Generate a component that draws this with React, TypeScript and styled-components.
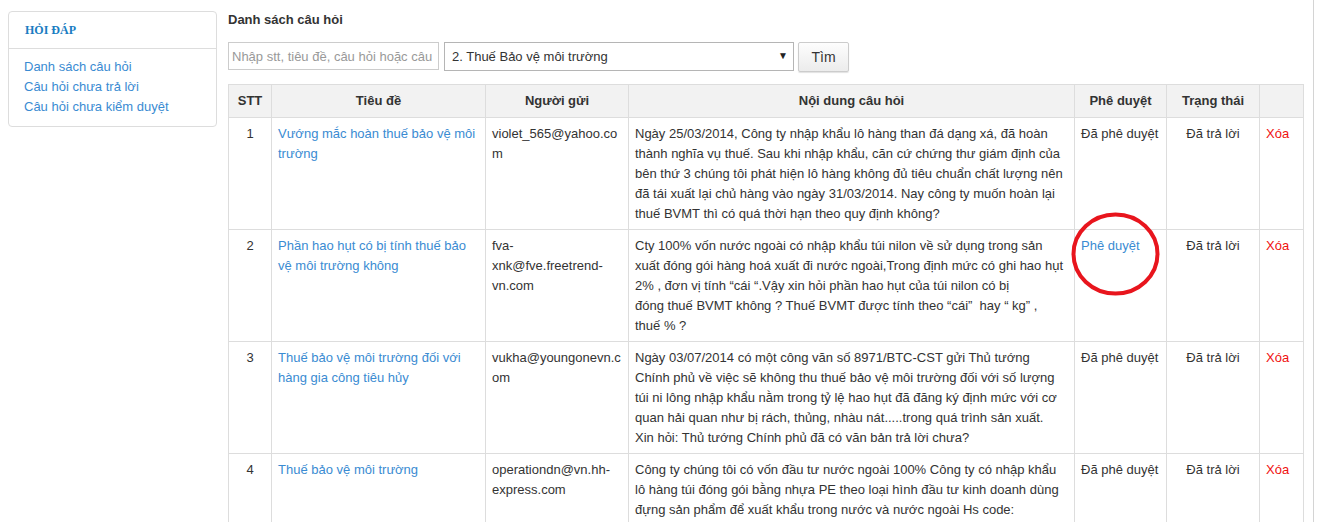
import React from "react";
import styled, { createGlobalStyle } from "styled-components";

const GlobalStyle = createGlobalStyle`
  html, body { margin: 0; padding: 0; background: #fff; }
  body {
    font-family: "Liberation Sans", Arial, Helvetica, sans-serif;
    font-size: 13px;
    color: #333;
  }
  * { box-sizing: border-box; }
`;

const Page = styled.div`
  display: flex;
  align-items: stretch;
  min-height: 100vh;
`;

const Sidebar = styled.aside`
  flex: none;
  align-self: flex-start;
  width: 209px;
  margin: 11px 0 0 8px;
  border: 1px solid #ddd;
  border-radius: 4px;
`;

const SideHeader = styled.div`
  height: 37px;
  line-height: 36px;
  padding-left: 16px;
  border-bottom: 1px solid #ddd;
  font-family: "Liberation Serif", "Times New Roman", serif;
  font-weight: bold;
  font-size: 12px;
  color: #1a7dc2;
`;

const SideList = styled.ul`
  list-style: none;
  margin: 0;
  padding: 8px 0 9px 15px;
`;

const SideItem = styled.li`
  line-height: 20px;
`;

const Link = styled.a`
  color: #3a8bd2;
  text-decoration: none;
`;

const Main = styled.main`
  flex: none;
  margin-left: 11px;
  padding: 10px 9px 0 0;
  border-right: 1px solid #d4d4d4;
`;

const Title = styled.h2`
  margin: 0;
  font-size: 13px;
  font-weight: bold;
  line-height: 20px;
  color: #333;
`;

const SearchBar = styled.form`
  display: flex;
  align-items: flex-start;
  margin: 12px 0 12px;
`;

const SearchInput = styled.input`
  width: 211px;
  height: 28px;
  padding: 0 3px;
  border: 1px solid #ccc;
  font-family: inherit;
  font-size: 13px;
  color: #333;
  outline: none;
  &::placeholder { color: #999; }
`;

const SelectWrap = styled.div`
  position: relative;
  margin-left: 5px;
`;

const Select = styled.select`
  appearance: none;
  -webkit-appearance: none;
  width: 350px;
  height: 29px;
  padding: 0 20px 0 7px;
  border: 1px solid #b5b5b5;
  border-radius: 0;
  background: #fff;
  font-family: inherit;
  font-size: 13px;
  color: #333;
`;

const SelectArrow = styled.span`
  position: absolute;
  right: 6px;
  top: 8px;
  font-size: 10px;
  line-height: 12px;
  color: #222;
  pointer-events: none;
`;

const Button = styled.button`
  margin-left: 4px;
  width: 51px;
  height: 30px;
  border: 1px solid #ccc;
  border-radius: 2px;
  background: linear-gradient(#fdfdfd, #ececec);
  box-shadow: 0 1px 1px rgba(0, 0, 0, 0.12);
  font-family: inherit;
  font-size: 14px;
  color: #333;
`;

const Table = styled.table`
  width: 1075px;
  table-layout: fixed;
  border-collapse: collapse;
  border: 1px solid #ddd;
`;

const Th = styled.th`
  padding: 6px 6px 6px;
  line-height: 20px;
  background: #f2f2f2;
  border: 1px solid #ddd;
  font-weight: bold;
  font-size: 13px;
  color: #333;
  text-align: center;
`;

const Td = styled.td<{ $align?: "left" | "center" }>`
  position: relative;
  padding: 6px 6px 5px;
  line-height: 20px;
  border: 1px solid #ddd;
  vertical-align: top;
  text-align: ${(p) => p.$align ?? "left"};
  overflow-wrap: anywhere;
  color: #333;
`;

const Delete = styled.a`
  color: #f01010;
  text-decoration: none;
`;

const Circle = styled.svg`
  position: absolute;
  left: -4px;
  top: -18px;
  width: 89px;
  height: 84px;
  pointer-events: none;
`;

type Row = {
  stt: number;
  title: string;
  sender: string;
  content: React.ReactNode;
  approved: boolean;
};

const rows: Row[] = [
  {
    stt: 1,
    title: "Vướng mắc hoàn thuế bảo vệ môi trường",
    sender: "violet_565@yahoo.com",
    content:
      "Ngày 25/03/2014, Công ty nhập khẩu lô hàng than đá dạng xá, đã hoàn thành nghĩa vụ thuế. Sau khi nhập khẩu, căn cứ chứng thư giám định của bên thứ 3 chúng tôi phát hiện lô hàng không đủ tiêu chuẩn chất lượng nên đã tái xuất lại chủ hàng vào ngày 31/03/2014. Nay công ty muốn hoàn lại thuế BVMT thì có quá thời hạn theo quy định không?",
    approved: true,
  },
  {
    stt: 2,
    title: "Phần hao hụt có bị tính thuế bảo vệ môi trường không",
    sender: "fva-xnk@fve.freetrend-vn.com",
    content: (
      <>
        Cty 100% vốn nước ngoài có nhập khẩu túi nilon về sử dụng trong sản xuất đóng gói hàng hoá xuất đi nước ngoài,Trong định mức có ghi hao hụt 2% , đơn vị tính “cái “.Vậy xin hỏi phần hao hụt của túi nilon có bị
        <br />
        đóng thuế BVMT không ? Thuế BVMT được tính theo “cái”&nbsp; hay “ kg” ,
        <br />
        thuế % ?
      </>
    ),
    approved: false,
  },
  {
    stt: 3,
    title: "Thuế bảo vệ môi trường đối với hàng gia công tiêu hủy",
    sender: "vukha@youngonevn.com",
    content: (
      <>
        Ngày 03/07/2014 có một công văn số 8971/BTC-CST gửi Thủ tướng Chính phủ về việc sẽ không thu thuế bảo vệ môi trường đối với số lượng túi ni lông nhập khẩu nằm trong tỷ lệ hao hụt đã đăng ký định mức với cơ quan hải quan như bị rách, thủng, nhàu nát.....trong quá trình sản xuất.
        <br />
        Xin hỏi: Thủ tướng Chính phủ đã có văn bản trả lời chưa?
      </>
    ),
    approved: true,
  },
  {
    stt: 4,
    title: "Thuế bảo vệ môi trường",
    sender: "operationdn@vn.hh-express.com",
    content:
      "Công ty chúng tôi có vốn đầu tư nước ngoài 100% Công ty có nhập khẩu lô hàng túi đóng gói bằng nhựa PE theo loại hình đầu tư kinh doanh dùng đựng sản phẩm để xuất khẩu trong nước và nước ngoài Hs code:",
    approved: true,
  },
];

export default function App() {
  return (
    <>
      <GlobalStyle />
      <Page>
        <Sidebar>
          <SideHeader>HỎI ĐÁP</SideHeader>
          <SideList>
            <SideItem><Link href="#">Danh sách câu hỏi</Link></SideItem>
            <SideItem><Link href="#">Câu hỏi chưa trả lời</Link></SideItem>
            <SideItem><Link href="#">Câu hỏi chưa kiểm duyệt</Link></SideItem>
          </SideList>
        </Sidebar>
        <Main>
          <Title>Danh sách câu hỏi</Title>
          <SearchBar onSubmit={(e) => e.preventDefault()}>
            <SearchInput placeholder="Nhập stt, tiêu đề, câu hỏi hoặc câu trả lời" />
            <SelectWrap>
              <Select defaultValue="2">
                <option value="1">1. Thuế Xuất nhập khẩu</option>
                <option value="2">2. Thuế Bảo vệ môi trường</option>
              </Select>
              <SelectArrow>▼</SelectArrow>
            </SelectWrap>
            <Button type="submit">Tìm</Button>
          </SearchBar>
          <Table>
            <colgroup>
              <col style={{ width: 43 }} />
              <col style={{ width: 214 }} />
              <col style={{ width: 143 }} />
              <col style={{ width: 446 }} />
              <col style={{ width: 92 }} />
              <col style={{ width: 93 }} />
              <col style={{ width: 44 }} />
            </colgroup>
            <thead>
              <tr>
                <Th>STT</Th>
                <Th>Tiêu đề</Th>
                <Th>Người gửi</Th>
                <Th>Nội dung câu hỏi</Th>
                <Th>Phê duyệt</Th>
                <Th>Trạng thái</Th>
                <Th></Th>
              </tr>
            </thead>
            <tbody>
              {rows.map((r) => (
                <tr key={r.stt}>
                  <Td $align="center">{r.stt}</Td>
                  <Td><Link href="#">{r.title}</Link></Td>
                  <Td>{r.sender}</Td>
                  <Td>{r.content}</Td>
                  <Td>
                    {r.approved ? (
                      "Đã phê duyệt"
                    ) : (
                      <>
                        <Link href="#">Phê duyệt</Link>
                        <Circle viewBox="0 0 89 84">
                          <ellipse cx="44.5" cy="42" rx="42" ry="39.5" fill="none" stroke="#e8151d" strokeWidth="4" />
                        </Circle>
                      </>
                    )}
                  </Td>
                  <Td $align="center">Đã trả lời</Td>
                  <Td><Delete href="#">Xóa</Delete></Td>
                </tr>
              ))}
            </tbody>
          </Table>
        </Main>
      </Page>
    </>
  );
}
